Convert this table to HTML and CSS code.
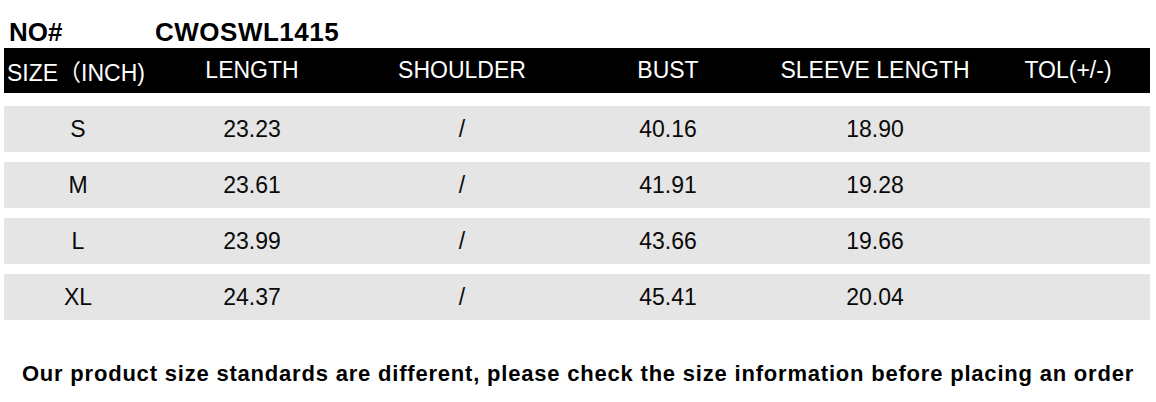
FILE: index.html
```html
<!DOCTYPE html>
<html>
<head>
<meta charset="utf-8">
<link rel="stylesheet" href="styles.css">
</head>
<body>
<div class="page">
  <div class="title">
    <span class="no">NO#</span>
    <span class="code">CWOSWL1415</span>
  </div>
  <div class="table">
    <div class="row head">
      <div class="cell">SIZE（INCH)</div>
      <div class="cell">LENGTH</div>
      <div class="cell">SHOULDER</div>
      <div class="cell">BUST</div>
      <div class="cell">SLEEVE LENGTH</div>
      <div class="cell">TOL(+/-)</div>
    </div>
    <div class="row data">
      <div class="cell">S</div>
      <div class="cell">23.23</div>
      <div class="cell">/</div>
      <div class="cell">40.16</div>
      <div class="cell">18.90</div>
      <div class="cell"></div>
    </div>
    <div class="row data">
      <div class="cell">M</div>
      <div class="cell">23.61</div>
      <div class="cell">/</div>
      <div class="cell">41.91</div>
      <div class="cell">19.28</div>
      <div class="cell"></div>
    </div>
    <div class="row data">
      <div class="cell">L</div>
      <div class="cell">23.99</div>
      <div class="cell">/</div>
      <div class="cell">43.66</div>
      <div class="cell">19.66</div>
      <div class="cell"></div>
    </div>
    <div class="row data">
      <div class="cell">XL</div>
      <div class="cell">24.37</div>
      <div class="cell">/</div>
      <div class="cell">45.41</div>
      <div class="cell">20.04</div>
      <div class="cell"></div>
    </div>
  </div>
  <p class="note">Our product size standards are different, please check the size information before placing an order</p>
</div>
</body>
</html>
```

FILE: styles.css
```css
html, body {
  margin: 0;
  padding: 0;
  background: #ffffff;
}

.page {
  width: 1156px;
  padding-top: 17px;
  font-family: "Liberation Sans", Arial, "Noto Sans CJK SC", sans-serif;
  color: #000;
}

.title {
  display: flex;
  height: 30px;
  line-height: 30px;
  margin-bottom: 1px;
  padding-left: 9px;
  font-size: 26px;
  font-weight: bold;
}

.title .no {
  width: 146px;
}

.title .code {
  letter-spacing: 0.5px;
}

.table {
  display: flex;
  flex-direction: column;
  margin-left: 4px;
  width: 1146px;
}

.row {
  display: grid;
  grid-template-columns: 148px 200px 220px 192px 222px 164px;
  align-items: center;
}

.row.head {
  background: #000;
  color: #fff;
  height: 45px;
  font-size: 23px;
  margin-bottom: 13px;
}

.row.head .cell:first-child {
  text-align: left;
  padding-left: 3px;
}

.row.data {
  background: #e5e5e5;
  height: 46px;
  font-size: 23px;
  color: #0a0a0a;
  margin-bottom: 10px;
}

.cell {
  text-align: center;
  white-space: nowrap;
}

.note {
  margin: 31px 0 0;
  text-align: center;
  font-size: 22px;
  line-height: 26px;
  font-weight: bold;
  letter-spacing: 0.8px;
}
```
